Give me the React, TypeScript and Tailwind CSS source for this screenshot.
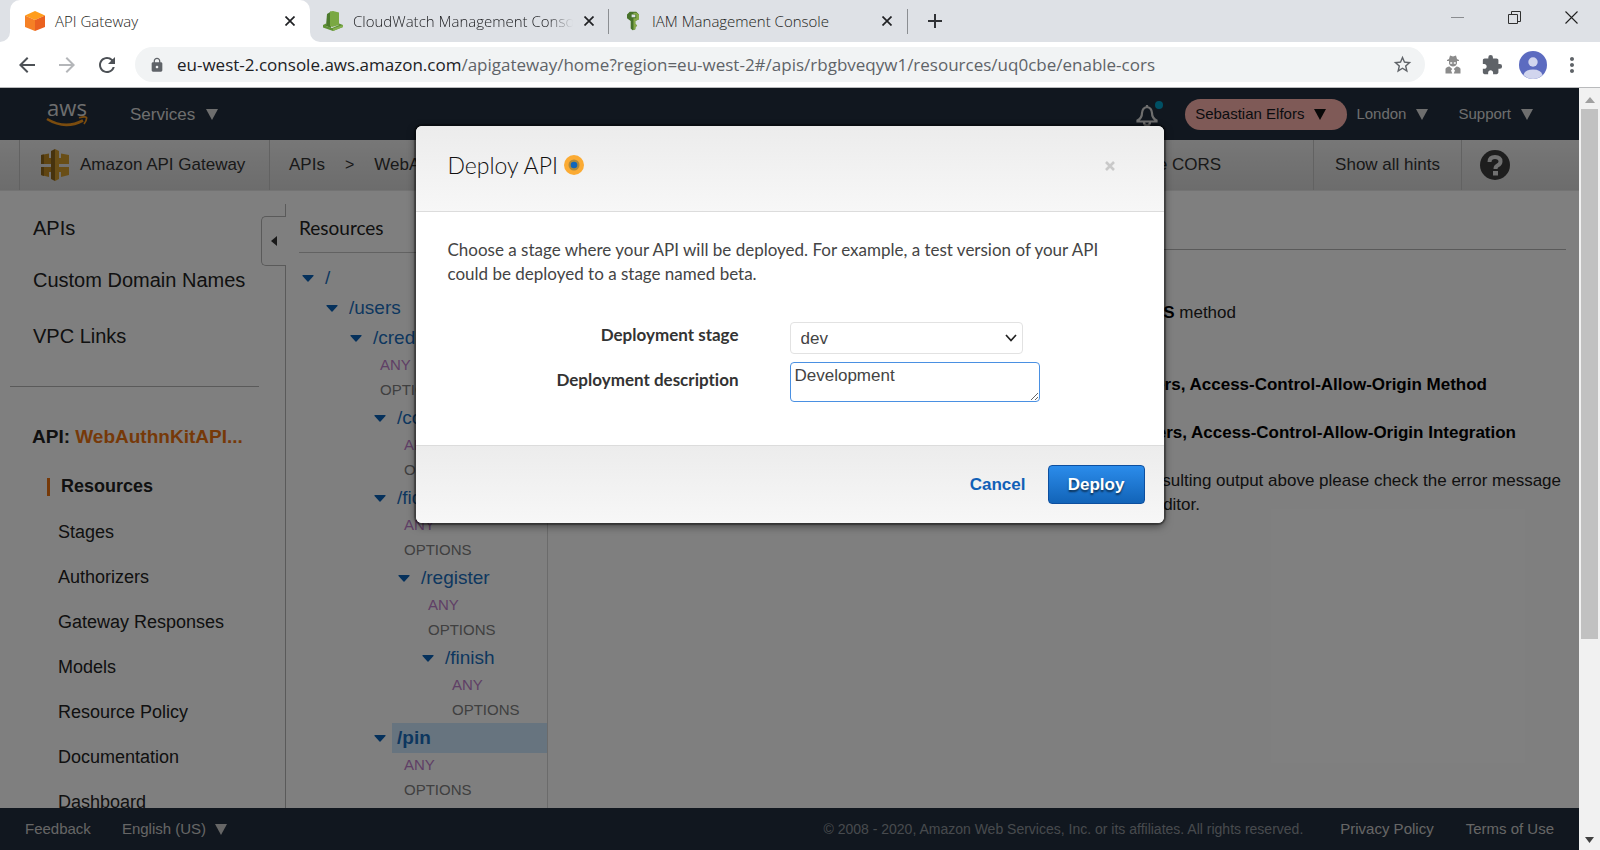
import React from "react";
import {
  MdArrowBack,
  MdArrowForward,
  MdExtension,
  MdLock,
  MdMoreVert,
  MdRefresh,
  MdStarBorder,
} from "react-icons/md";

function CubeIcon() {
  return (
    <svg viewBox="0 0 20 20" className="size-5 shrink-0" aria-hidden="true">
      <path d="M10 0 L20 4.5 L10 9 L0 4.5 Z" fill="#ff9d1c" />
      <path d="M0 4.5 L10 9 V20 L0 16 Z" fill="#f58025" />
      <path d="M20 4.5 L10 9 V20 L20 16 Z" fill="#ea6120" />
    </svg>
  );
}

function CloudWatchIcon() {
  return (
    <svg viewBox="0 0 20 20" className="size-5 shrink-0" aria-hidden="true">
      <path d="M4 3 L8 0.5 V17 L3 15 Z" fill="#4c7a2c" />
      <path d="M7 0.5 L10 0 L16 1.500 V14 L9 16 L7 15 Z" fill="#7aa843" />
      <path d="M0 14 L3 12.500 V15 L9 17 L16 14 V12.500 L20 14 V16 L10 20 L0 16.500 Z" fill="#5f9136" />
      <path d="M10 17.500 L20 14 V16 L10 20 Z" fill="#84b04e" />
    </svg>
  );
}

function KeyIcon() {
  return (
    <svg viewBox="0 0 13 20" className="h-5 w-3 shrink-0" aria-hidden="true">
      <path fillRule="evenodd" d="M3 0 H10 L13 3 V8 L9 10 V13 L11 15 L9 17 V19 L6 20 L4 18 V10 L0 7 V3 Z M5 3 V6 H9 V3 Z" fill="#47722a" />
      <path fillRule="evenodd" d="M7 1 H10 L13 3 V8 L9 10 V13 L11 15 L9 17 V19 L7 20 V7 H10 V3 H7 Z" fill="#86a94a" />
    </svg>
  );
}

function SpyIcon() {
  return (
    <svg viewBox="0 0 16 19" className="h-[19px] w-4" fill="#8b8b8b" aria-hidden="true">
      <path d="M5 0.5 L8 1.5 L11 0.5 L12 4 L14 5 V6 H2 V5 L4 4 Z" />
      <path fillRule="evenodd" d="M4 6 H12 V8.5 Q11 11.5 8 11.5 Q5 11.5 4 8.5 Z M5.2 7.2 V8.8 H7.2 V7.2 Z M8.8 7.2 V8.8 H10.8 V7.2 Z" />
      <path d="M0.5 18.5 V14 Q1 12 4.5 11.5 L7.3 14 L6 15.5 L7.3 18.5 Z M15.5 18.5 V14 Q15 12 11.5 11.5 L8.7 14 L10 15.5 L8.7 18.5 Z" />
    </svg>
  );
}

function Avatar() {
  return (
    <svg viewBox="0 0 28 28" className="ml-4 size-7 shrink-0" aria-hidden="true">
      <circle cx="14" cy="14" r="14" fill="#5c6bc0" />
      <circle cx="14" cy="11" r="4.7" fill="#d1d5ee" />
      <path d="M4.5 24 Q6 18.5 14 18.5 Q22 18.5 23.500 24 Q19.500 28 14 28 Q8.500 28 4.500 24 Z" fill="#d1d5ee" />
    </svg>
  );
}

function GatewayIcon() {
  return (
    <svg viewBox="0 0 28 32" className="h-8 w-7 shrink-0" aria-hidden="true">
      <path d="M0 6 L8 4.500 V9 H12 V15 H0 Z M0 18 H12 V23 H8 V28 L0 26 Z" fill="#c08b22" />
      <path d="M28 6 L20 4.500 V9 H16 V15 H28 Z M28 18 H16 V23 H20 V28 L28 26 Z" fill="#d39c2c" />
      <path d="M0 6 L3 5.500 V15 H0 Z M0 18 H3 V27 L0 26 Z" fill="#8f661a" />
      <path d="M10 2 L14 0 V32 L10 30 Z" fill="#8f661a" />
      <path d="M14 0 L18 2 V30 L14 32 Z" fill="#d39c2c" />
    </svg>
  );
}

function Triangle({ className }: { className: string }) {
  return (
    <svg viewBox="0 0 12 11" className={"h-[11px] w-3 shrink-0 " + className} fill="currentColor" aria-hidden="true">
      <path d="M0 0 H12 L6 11 Z" />
    </svg>
  );
}

function CloseGlyph() {
  return (
    <svg viewBox="0 0 10 10" className="size-[10px]" stroke="#202124" strokeWidth="1.7" aria-hidden="true">
      <path d="M0.5 0.5 L9.500 9.500 M9.500 0.5 L0.5 9.500" />
    </svg>
  );
}

function TabStrip() {
  return (
    <div className="flex h-[42px] items-stretch bg-[#dee1e6] font-['Open_Sans','Noto_Sans',sans-serif] text-[15px] leading-5 font-light text-[#1c1d20]">
      <div className="w-[10px] bg-white">
        <div className="h-full rounded-br-[10px] bg-[#dee1e6]" />
      </div>
      <div className="bg-[#dee1e6]">
        <div className="flex h-full w-[300px] items-center rounded-t-[10px] bg-white pr-[15px] pl-[15px]">
          <CubeIcon />
          <span className="ml-[10px] flex-1 whitespace-nowrap">API Gateway</span>
          <button aria-label="Close API Gateway tab"><CloseGlyph /></button>
        </div>
      </div>
      <div className="w-[10px] bg-white">
        <div className="h-full rounded-bl-[10px] bg-[#dee1e6]" />
      </div>
      <div className="flex w-[288px] items-center pl-[3px]">
        <CloudWatchIcon />
        <span className="mr-[11px] ml-[10px] w-[220px] overflow-hidden whitespace-nowrap [mask-image:linear-gradient(to_right,black_88%,transparent)]">
          CloudWatch Management Console
        </span>
        <button aria-label="Close CloudWatch tab"><CloseGlyph /></button>
      </div>
      <div className="my-auto h-[25px] w-px bg-[#8b8e92]" />
      <div className="flex w-[298px] items-center pl-[18px]">
        <KeyIcon />
        <span className="ml-[13px] w-[230px] whitespace-nowrap">IAM Management Console</span>
        <button aria-label="Close IAM tab"><CloseGlyph /></button>
      </div>
      <div className="my-auto h-[25px] w-px bg-[#8b8e92]" />
      <button aria-label="New tab" className="ml-5">
        <svg viewBox="0 0 14 14" className="size-[14px]" stroke="#303236" strokeWidth="2" aria-hidden="true">
          <path d="M7 0 V14 M0 7 H14" />
        </svg>
      </button>
      <div className="ml-auto flex items-start gap-11 pt-[11px] pr-[22px]">
        <button aria-label="Minimize">
          <svg viewBox="0 0 13 13" className="size-[13px]" stroke="#8a8c90" aria-hidden="true"><path d="M0 6.500 H13" /></svg>
        </button>
        <button aria-label="Restore">
          <svg viewBox="0 0 13 13" className="size-[13px]" stroke="#303030" fill="none" aria-hidden="true">
            <path d="M0.5 3.500 H9.500 V12.500 H0.5 Z M3.500 3.500 V0.5 H12.500 V10.500 H9.500" />
          </svg>
        </button>
        <button aria-label="Close window">
          <svg viewBox="0 0 13 13" className="size-[13px]" stroke="#202020" strokeWidth="1.1" aria-hidden="true"><path d="M0.5 0.5 L12.500 12.500 M12.500 0.5 L0.5 12.500" /></svg>
        </button>
      </div>
    </div>
  );
}

function Toolbar() {
  return (
    <div className="flex h-[46px] items-center border-b border-[#b9babc] bg-white pr-4 pl-[15px] text-[#5f6368]">
      <button aria-label="Back" className="text-[#4d5156]"><MdArrowBack className="size-6" /></button>
      <button aria-label="Forward" className="ml-4 text-[#b4b6b9]"><MdArrowForward className="size-6" /></button>
      <button aria-label="Reload" className="ml-4 text-[#4d5156]"><MdRefresh className="size-6" /></button>
      <div className="ml-4 flex h-[35px] flex-1 items-center rounded-full bg-[#f1f3f4] pr-3 pl-[14px]">
        <MdLock className="size-4 shrink-0" />
        <div className="ml-3 flex-1 whitespace-nowrap font-['Open_Sans','Noto_Sans',sans-serif] text-[17px]">
          <span className="text-[#202124]">eu-west-2.console.aws.amazon.com</span>
          /apigateway/home?region=eu-west-2#/apis/rbgbveqyw1/resources/uq0cbe/enable-cors
        </div>
        <button aria-label="Bookmark"><MdStarBorder className="size-[21px]" /></button>
      </div>
      <div className="ml-5 flex items-center gap-5">
        <SpyIcon />
        <MdExtension className="size-[22px]" />
      </div>
      <Avatar />
      <button aria-label="Menu" className="ml-[13px]"><MdMoreVert className="size-6" /></button>
    </div>
  );
}

function AwsHeader() {
  return (
    <header className="flex h-[52px] items-center bg-[#232f3e] pr-[46px] pl-[46px] text-[15px] text-[#dddddd]">
      <a href="#home" aria-label="aws home" className="-mt-1 flex w-[42px] flex-col items-center">
        <span className="font-['Open_Sans',sans-serif] text-[22px] leading-[18px] font-medium">aws</span>
        <svg viewBox="0 0 42 11" className="h-[11px] w-[42px]" fill="none" stroke="#f7981d" aria-hidden="true">
          <path d="M1 3 Q19 14 37 4.500" strokeWidth="2.6" />
          <path d="M33 1.800 Q39 0 40.500 1.500 Q41 4 38 8" strokeWidth="1.7" />
        </svg>
      </a>
      <button className="ml-[42px] flex items-center gap-[11px] pt-[1px] text-[17px]">
        Services <Triangle className="" />
      </button>
      <div className="ml-auto flex items-center">
        <button aria-label="Notifications" className="relative mt-1 mr-[27px]">
          <svg viewBox="0 0 22 22" className="size-[22px]" fill="none" stroke="currentColor" strokeWidth="2.2" aria-hidden="true">
            <path d="M11 2 Q6.500 2.500 6 8 Q6 13 1.500 15.500 V16.500 H20.500 V15.500 Q16 13 16 8 Q15.500 2.500 11 2 Z" />
            <path d="M8 17 Q8 20.500 11 20.500 Q14 20.500 14 17" />
            <path d="M11 0 V2" />
          </svg>
          <span className="absolute -top-1 -right-[5px] size-2 rounded-full bg-[#00a1c9]" />
        </button>
        <button className="flex h-[31px] items-center gap-[10px] rounded-full bg-[#ffb5ae] pr-[21px] pl-[10px] text-[#16191f]">
          Sebastian Elfors <Triangle className="text-[#111111]" />
        </button>
        <button className="ml-[9px] flex items-center gap-[10px]">London <Triangle className="" /></button>
        <button className="ml-[30px] flex items-center gap-[10px]">Support <Triangle className="" /></button>
      </div>
    </header>
  );
}

function BreadcrumbBar() {
  return (
    <div className="flex h-[51px] items-stretch border-b border-[#e6e6e6] bg-linear-to-b from-[#efefef] to-[#d9d9d9] pl-[19px] text-[17px] whitespace-nowrap text-[#333333]">
      <div className="flex w-[251px] items-center border-x border-[#c4c4c4] pl-[21px]">
        <GatewayIcon />
        <span className="ml-[11px]">Amazon API Gateway</span>
      </div>
      <nav className="flex flex-1 items-center pl-[19px]">
        <a href="#apis">APIs</a>
        <span className="ml-5 text-[16px]">&gt;</span>
        <a href="#api" className="ml-5">WebAuthnKitAPI</a>
        <span className="ml-auto text-[16px]">&gt;</span>
        <span className="mr-[92px] ml-5">Enable CORS</span>
      </nav>
      <button className="border-x border-[#c4c4c4] px-[21px]">Show all hints</button>
      <div className="flex w-[117px] items-center pl-[18px]">
        <button aria-label="Help">
          <svg viewBox="0 0 30 30" className="size-[30px]" aria-hidden="true">
            <circle cx="15" cy="15" r="15" fill="#3c3c3c" />
            <path d="M9.500 12 Q9.500 7 15 7 Q20.500 7 20.500 11.500 Q20.500 14 17.500 15.500 Q15.500 16.500 15.500 19" fill="none" stroke="#e2e2e2" strokeWidth="4" />
            <rect x="13" y="21" width="5" height="4.500" fill="#e2e2e2" />
          </svg>
        </button>
      </div>
    </div>
  );
}

const apiLinks = [
  "Stages",
  "Authorizers",
  "Gateway Responses",
  "Models",
  "Resource Policy",
  "Documentation",
  "Dashboard",
];

function Sidebar() {
  return (
    <aside className="flex w-[286px] shrink-0 pt-[13px] text-[#222222]">
      <div className="w-[261px] pl-[10px]">
        <nav className="flex flex-col pt-3 pl-[23px] text-[20px] leading-6">
          <a href="#apis">APIs</a>
          <a href="#domains" className="mt-7">Custom Domain Names</a>
          <a href="#vpc" className="mt-8">VPC Links</a>
        </nav>
        <hr className="mt-[38px] mr-[2px] border-[#b4b4b4]" />
        <h2 className="mt-[38px] pl-[22px] text-[19px] leading-6 font-bold">
          API: <a href="#api" className="text-[#ec7211]">WebAuthnKitAPI...</a>
        </h2>
        <nav className="mt-[15px] flex flex-col text-[18px]">
          <a href="#resources" className="flex h-[45px] items-center pl-[37px] font-bold">
            <span className="mr-[11px] h-[18px] w-[3px] bg-[#ec7211]" />
            Resources
          </a>
          {apiLinks.map((label) => (
            <a key={label} href="#section" className="flex h-[45px] items-center pt-[2px] pl-12">{label}</a>
          ))}
        </nav>
      </div>
      <div className="flex flex-1 flex-col">
        <div className="h-3 border-r border-[#b4b4b4]" />
        <button aria-label="Collapse navigation" className="flex h-[50px] items-center justify-center rounded-l-[5px] border border-r-0 border-[#b4b4b4]">
          <svg viewBox="0 0 6 10" className="h-[10px] w-[6px]" fill="#333333" aria-hidden="true"><path d="M6 0 V10 L0 5 Z" /></svg>
        </button>
        <div className="flex-1 border-r border-[#b4b4b4]" />
      </div>
    </aside>
  );
}

type TreeNode = { path: string; methods?: string[]; selected?: boolean; children?: TreeNode[] };

const both = ["ANY", "OPTIONS"];

const tree: TreeNode = {
  path: "/",
  children: [
    {
      path: "/users",
      children: [
        {
          path: "/credential",
          methods: both,
          children: [
            { path: "/code", methods: both },
            {
              path: "/fido2",
              methods: both,
              children: [
                {
                  path: "/register",
                  methods: both,
                  children: [{ path: "/finish", methods: both }],
                },
              ],
            },
            { path: "/pin", methods: both, selected: true },
          ],
        },
      ],
    },
  ],
};

function Branch({ node }: { node: TreeNode }) {
  return (
    <li>
      <div className="flex h-[30px] items-center text-[19px] text-[#1a6fbf]">
        <svg viewBox="0 0 12 7" className="h-[7px] w-3 shrink-0" fill="#0b62b8" aria-hidden="true">
          <path d="M1 0 H11 Q12 0 11.500 1 L6.500 6.500 Q6 7 5.500 6.500 L0.5 1 Q0 0 1 0 Z" />
        </svg>
        {node.selected ? (
          <a href="#pin" className="ml-[6px] flex h-full flex-1 items-center bg-[#cfe8ff] pl-[5px] font-bold">{node.path}</a>
        ) : (
          <a href="#node" className="ml-[11px]">{node.path}</a>
        )}
      </div>
      {node.methods?.map((method) => (
        <a
          key={method}
          href="#method"
          className={"flex h-[25px] items-center pl-[30px] text-[15px] " + (method === "ANY" ? "text-[#be80cc]" : "text-[#808080]")}
        >
          {method}
        </a>
      ))}
      {node.children && (
        <ul className="pl-6">
          {node.children.map((child) => (
            <Branch key={child.path} node={child} />
          ))}
        </ul>
      )}
    </li>
  );
}

function ResourcesPanel() {
  return (
    <section className="w-[262px] shrink-0 border-r border-[#d6d6d6] pt-[13px] text-[#222222]">
      <div className="ml-[13px] border-b border-[#c4c4c4]">
        <h2 className="pt-3 pb-3 font-[Lato,sans-serif] text-[19px] leading-6">Resources</h2>
      </div>
      <ul className="pt-[10px] pl-4">
        <Branch node={tree} />
      </ul>
    </section>
  );
}

function MethodPanel() {
  return (
    <main className="min-w-0 flex-1 pr-[13px] pl-[14px] text-[17px] leading-6 text-[#222222]">
      <h2 className="h-[59px] border-b border-[#b4b4b4] pt-6 text-[19px]">Enable CORS</h2>
      <div className="flex flex-col items-end gap-6 pt-[51px] text-right whitespace-nowrap">
        <p className="mr-[330px]">Create <strong className="text-[#000000]">OPTIONS</strong> method</p>
        <p className="mt-6 mr-[79px] font-bold text-[#000000]">
          Add Access-Control-Allow-Headers, Access-Control-Allow-Origin Method
        </p>
        <p className="mr-[50px] font-bold text-[#000000]">
          Add Access-Control-Allow-Headers, Access-Control-Allow-Origin Integration
        </p>
        <div className="mr-[5px]">
          <p>If you see any errors in the resulting output above please check the error message</p>
          <p className="mr-[361px]">and retry the failed step via the Method Editor.</p>
        </div>
      </div>
    </main>
  );
}

function Footer() {
  return (
    <footer className="flex h-[42px] items-center bg-[#232f3e] pr-[25px] pl-[25px] text-[15px] whitespace-nowrap text-[#cccccc]">
      <a href="#feedback">Feedback</a>
      <button className="ml-[31px] flex items-center gap-[9px]">English (US) <Triangle className="" /></button>
      <span className="ml-auto text-[14px] text-[#8f959c]">
        © 2008 - 2020, Amazon Web Services, Inc. or its affiliates. All rights reserved.
      </span>
      <a href="#privacy" className="ml-[37px]">Privacy Policy</a>
      <a href="#terms" className="ml-8">Terms of Use</a>
    </footer>
  );
}

function DeployDialog() {
  return (
    <div role="dialog" aria-labelledby="deploy-title" className="w-[748px] overflow-hidden rounded-[6px] bg-white font-[Lato,sans-serif] text-[#444444] shadow-[0_3px_9px_rgba(0,0,0,0.5),0_0_1px_2px_rgba(0,0,0,0.35)] [font-variant-ligatures:none]">
      <div className="flex h-[86px] items-start border-b border-[#dcdcdc] bg-linear-to-b from-[#ececec] to-[#f7f7f7] pt-[23px] pr-[49px] pl-8">
        <h1 id="deploy-title" className="text-[23px] leading-8 font-light text-[#111111]">Deploy API</h1>
        <svg viewBox="0 0 20 20" className="mt-[6px] ml-[6px] size-5" aria-hidden="true">
          <circle cx="10" cy="10" r="10" fill="#fbab34" />
          <circle cx="10" cy="10" r="5.500" fill="#b08a3c" />
          <circle cx="10" cy="10" r="3.300" fill="#1166bb" />
        </svg>
        <button aria-label="Close" className="mt-3 ml-auto">
          <svg viewBox="0 0 10 10" className="size-[10px]" stroke="#c9c9c9" strokeWidth="2.6" aria-hidden="true"><path d="M1 1 L9 9 M9 1 L1 9" /></svg>
        </button>
      </div>
      <div className="h-[233px] pt-[26px] pr-8 pl-8">
        <p className="text-[17px] leading-6">
          Choose a stage where your API will be deployed. For example, a test version of your API could be deployed to a stage named beta.
        </p>
        <div className="mt-9 grid grid-cols-[291px_1fr] gap-x-[51px]">
          <label htmlFor="stage" className="pt-[1px] text-right text-[17px] leading-6 font-bold text-[#333333]">Deployment stage</label>
          <div className="relative w-[233px]">
            <select id="stage" defaultValue="dev" className="h-8 w-full appearance-none rounded-[4px] border border-[#e2e2e2] bg-white pt-[2px] pl-[10px] font-['Liberation_Sans',Arial,sans-serif] text-[17px] text-[#444444]">
              <option>dev</option>
            </select>
            <svg viewBox="0 0 12 8" className="pointer-events-none absolute top-3 right-[6px] h-2 w-3" fill="none" stroke="#222222" strokeWidth="1.7" aria-hidden="true"><path d="M1 1 L6 6.500 L11 1" /></svg>
          </div>
          <label htmlFor="description" className="pt-[14px] text-right text-[17px] leading-6 font-bold text-[#333333]">Deployment description</label>
          <textarea
            id="description"
            defaultValue="Development"
            className="mt-2 h-10 w-[250px] rounded-[4px] border border-[#4a90e2] px-1 py-[2px] font-['Liberation_Sans',Arial,sans-serif] text-[17px] leading-[22px] text-[#444444] outline-none"
          />
        </div>
      </div>
      <div className="flex h-[78px] items-center justify-end border-t border-[#dcdcdc] bg-linear-to-b from-[#ececec] to-[#f7f7f7] pr-[19px] font-['Liberation_Sans',Arial,sans-serif] text-[17px] font-bold">
        <button className="text-[#1160b7]">Cancel</button>
        <button className="ml-[22px] h-[39px] w-[97px] rounded-[4px] border border-[#0d4f9f] bg-linear-to-b from-[#2b8ceb] to-[#1264b8] text-white [text-shadow:0_2px_2px_rgba(0,0,0,0.6)]">Deploy</button>
      </div>
    </div>
  );
}

function Scrollbar() {
  return (
    <div className="flex w-[21px] shrink-0 flex-col items-center bg-[#f1f1f1]" aria-hidden="true">
      <svg viewBox="0 0 10 6" className="mt-[9px] h-[6px] w-[10px]" fill="#a0a0a0"><path d="M0 6 L5 0 L10 6 Z" /></svg>
      <div className="mt-[6px] h-[530px] w-[17px] bg-[#c1c1c1]" />
      <svg viewBox="0 0 9 6" className="mt-auto mb-[7px] h-[6px] w-[9px]" fill="#404040"><path d="M0 0 L4.500 6 L9 0 Z" /></svg>
    </div>
  );
}

export default function App() {
  return (
    <div className="flex h-screen flex-col overflow-hidden font-['Liberation_Sans',Arial,sans-serif]">
      <TabStrip />
      <Toolbar />
      <div className="flex min-h-0 flex-1">
        <div className="relative flex min-w-0 flex-1 flex-col bg-white">
          <AwsHeader />
          <BreadcrumbBar />
          <div className="flex min-h-0 flex-1 overflow-hidden">
            <Sidebar />
            <ResourcesPanel />
            <MethodPanel />
          </div>
          <Footer />
          <div className="absolute inset-0 flex items-start justify-center bg-black/50 pt-[38px]">
            <DeployDialog />
          </div>
        </div>
        <Scrollbar />
      </div>
    </div>
  );
}
